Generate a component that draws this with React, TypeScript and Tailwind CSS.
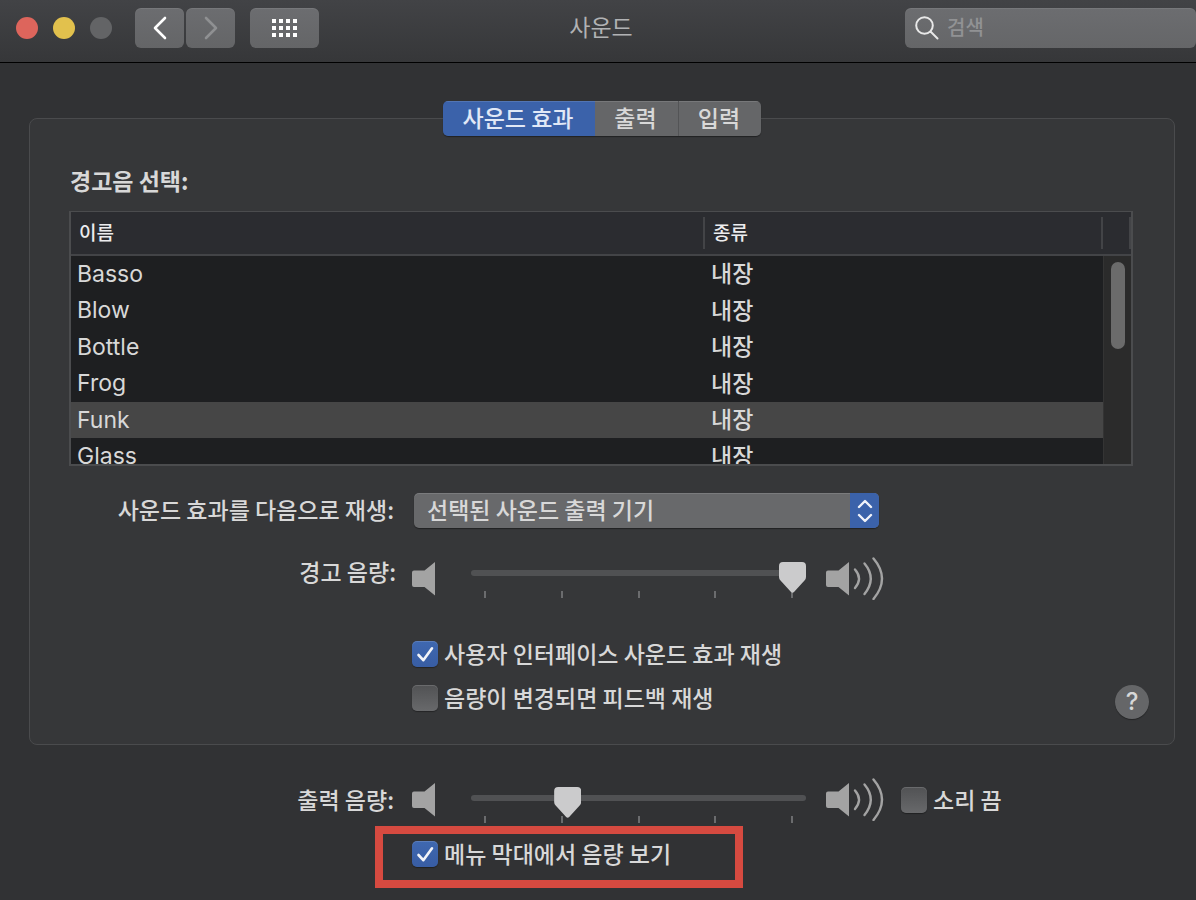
import React, { useState } from 'react';

interface AlertSound {
  name: string;
  kind: string;
}

const SOUNDS: AlertSound[] = [
  { name: 'Basso', kind: '내장' },
  { name: 'Blow', kind: '내장' },
  { name: 'Bottle', kind: '내장' },
  { name: 'Frog', kind: '내장' },
  { name: 'Funk', kind: '내장' },
  { name: 'Glass', kind: '내장' },
];

const TABS = ['사운드 효과', '출력', '입력'];

const SpeakerIcon: React.FC = () => (
  <svg width="24" height="43" viewBox="0 0 24 43" fill="#a3a3a3" className="shrink-0" aria-hidden="true">
    <path d="M2 13.5h10.5L23 5v33.500L12.500 30H2q-2 0-2-2V15.500q0-2 2-2z" />
  </svg>
);

const SpeakerLoudIcon: React.FC = () => (
  <svg width="58" height="43" viewBox="0 0 58 43" fill="none" className="shrink-0" aria-hidden="true">
    <path fill="#a3a3a3" d="M2 13.500h10.500L23 5v33.500L12.500 30H2q-2 0-2-2V15.500q0-2 2-2z" />
    <g stroke="#a3a3a3" strokeWidth="2.400" strokeLinecap="round">
      <path d="M29 12.500q8 9 0 18.500" />
      <path d="M38.500 6.500q12.500 15 0 30.500" />
      <path d="M47.500 1.500q17 20 0 40.500" />
    </g>
  </svg>
);

interface CheckboxProps {
  label: string;
  defaultChecked?: boolean;
}

const Checkbox: React.FC<CheckboxProps> = ({ label, defaultChecked }) => (
  <label className="flex items-center gap-1.5 h-[26px] whitespace-nowrap">
    <span className="relative size-[26px] shrink-0">
      <input
        type="checkbox"
        defaultChecked={defaultChecked}
        className="peer block size-[26px] appearance-none rounded-[5px] bg-linear-to-b from-[#515254] to-[#68696b] shadow-[0_1px_1px_rgba(0,0,0,0.35),inset_0_1px_0_rgba(255,255,255,0.14)] checked:from-[#3f68b0] checked:to-[#385da3]"
      />
      <svg
        viewBox="0 0 26 26"
        className="absolute inset-0 hidden size-[26px] pointer-events-none peer-checked:block"
        fill="none"
        stroke="#f2f4f8"
        strokeWidth="2.600"
        strokeLinecap="round"
        strokeLinejoin="round"
        aria-hidden="true"
      >
        <path d="M6.500 14l4.800 5.200L20 7.300" />
      </svg>
    </span>
    <span className="pb-[3px]">{label}</span>
  </label>
);

interface VolumeSliderProps {
  id: string;
  initial: number;
}

const VolumeSlider: React.FC<VolumeSliderProps> = ({ id, initial }) => (
  <div className="w-[335px]">
    <input
      id={id}
      type="range"
      min={0}
      max={100}
      defaultValue={initial}
      className="block w-full h-[31px] appearance-none bg-transparent [&::-webkit-slider-runnable-track]:h-1.5 [&::-webkit-slider-runnable-track]:rounded-full [&::-webkit-slider-runnable-track]:bg-[#505153] [&::-webkit-slider-runnable-track]:mb-[9px] [&::-webkit-slider-thumb]:appearance-none [&::-webkit-slider-thumb]:relative [&::-webkit-slider-thumb]:w-[27px] [&::-webkit-slider-thumb]:h-[31px] [&::-webkit-slider-thumb]:-mt-2 [&::-webkit-slider-thumb]:bg-[#cbcbcc] [&::-webkit-slider-thumb]:[clip-path:path('M4_0H23Q27_0_27_4V15Q27_17_25.500_18.500L15_30Q13.500_31.500_12_30L1.500_18.500Q0_17_0_15V4Q0_0_4_0Z')]"
    />
    <div className="flex justify-between px-[13px] -mt-0.5">
      {[0, 1, 2, 3, 4].map((t) => (
        <span key={t} className="w-0.5 h-[7px] bg-[#6b6c6e]" />
      ))}
    </div>
  </div>
);

const TitleBar: React.FC = () => (
  <header className="grid grid-cols-[1fr_auto_1fr] items-start h-[63px] pt-2 border-b border-black bg-linear-to-b from-[#424346] to-[#363739]">
    <div className="flex items-center h-10 pl-4">
      <div className="flex gap-[15px] mr-[23px]">
        <button aria-label="닫기" className="size-[22px] rounded-full bg-[#dd655c]" />
        <button aria-label="최소화" className="size-[22px] rounded-full bg-[#e2c14d]" />
        <button aria-label="확대" disabled className="size-[22px] rounded-full bg-[#636466]" />
      </div>
      <div className="flex gap-0.5 mr-[15px]">
        <button aria-label="뒤로" className="grid place-items-center w-[49px] h-10 rounded-md bg-linear-to-b from-[#6c6d70] to-[#646567] shadow-[inset_0_1px_0_rgba(255,255,255,0.08)]">
          <svg width="14" height="24" viewBox="0 0 14 24" fill="none" stroke="#fff" strokeWidth="2.600" strokeLinecap="round" strokeLinejoin="round" aria-hidden="true">
            <path d="M12 2L2 12l10 10" />
          </svg>
        </button>
        <button aria-label="앞으로" disabled className="grid place-items-center w-[49px] h-10 rounded-md bg-linear-to-b from-[#6c6d70] to-[#646567] shadow-[inset_0_1px_0_rgba(255,255,255,0.08)]">
          <svg width="14" height="24" viewBox="0 0 14 24" fill="none" stroke="#8f9092" strokeWidth="2.600" strokeLinecap="round" strokeLinejoin="round" aria-hidden="true">
            <path d="M2 2l10 10L2 22" />
          </svg>
        </button>
      </div>
      <button aria-label="모두 보기" className="grid place-items-center w-[69px] h-10 rounded-md bg-linear-to-b from-[#6c6d70] to-[#646567] shadow-[inset_0_1px_0_rgba(255,255,255,0.08)]">
        <span className="grid grid-cols-4 gap-[3px]">
          {Array.from({ length: 12 }, (_, i) => (
            <span key={i} className="size-1 bg-white" />
          ))}
        </span>
      </button>
    </div>
    <h1 className="pl-1.5 leading-9 font-normal text-[#b1b2b4]">사운드</h1>
    <label className="justify-self-end flex items-center gap-2 w-[291px] h-10 pl-2.5 rounded-md bg-linear-to-b from-[#6c6d70] to-[#656668] shadow-[inset_0_1px_0_rgba(255,255,255,0.08)]">
      <svg width="24" height="24" viewBox="0 0 24 24" fill="none" stroke="#e8e8e8" strokeWidth="2" strokeLinecap="round" className="shrink-0" aria-hidden="true">
        <circle cx="9.500" cy="9.500" r="8.300" />
        <path d="M15.500 15.500l7 7" />
      </svg>
      <input type="search" aria-label="검색" placeholder="검색" className="w-full pb-0.5 text-xl leading-7 bg-transparent outline-none placeholder:text-[#919294]" />
    </label>
  </header>
);

const SoundTable: React.FC = () => {
  const [selected, setSelected] = useState('Funk');

  return (
    <div className="flex h-[255px] overflow-hidden border-2 border-t border-[#4b4c4e] bg-[#1e1f21]">
      <div className="flex-1 overflow-hidden">
        <table className="w-full table-fixed border-separate border-spacing-0 text-left">
          <thead className="bg-[#2b2c30] text-[19px] text-[#ececee]">
            <tr>
              <th className="p-0 border-b-2 border-[#434447] font-medium">
                <div className="flex items-center justify-between h-[42px] pl-2">
                  <span className="pb-[3px]">이름</span>
                  <span className="w-0.5 h-8 bg-[#434447]" />
                </div>
              </th>
              <th className="w-[398px] p-0 border-b-2 border-[#434447] font-medium">
                <div className="flex items-center justify-between h-[42px] pl-2">
                  <span className="pb-[3px]">종류</span>
                  <span className="w-0.5 h-8 bg-[#434447]" />
                </div>
              </th>
            </tr>
          </thead>
          <tbody>
            {SOUNDS.map((sound) => (
              <tr
                key={sound.name}
                onClick={() => setSelected(sound.name)}
                className={`odd:h-9 even:h-[37px] ${sound.name === selected ? 'bg-[#464646]' : ''}`}
              >
                <td className="p-0 pl-1.5 pb-px leading-8 font-normal font-['Inter','Noto_Sans_CJK_KR',sans-serif]">{sound.name}</td>
                <td className="p-0 pl-1.5 pb-1 leading-8">{sound.kind}</td>
              </tr>
            ))}
          </tbody>
        </table>
      </div>
      <div className="flex flex-col w-7">
        <div className="flex items-center justify-end h-11 border-b-2 border-[#434447] bg-[#2b2c30]">
          <span className="w-0.5 h-8 bg-[#434447]" />
        </div>
        <div className="flex-1 pt-1.5 pl-[7px] border-l border-[#343434] bg-[#2b2b2b]">
          <div className="w-3.5 h-[87px] rounded-full bg-[#6b6b6b]" />
        </div>
      </div>
    </div>
  );
};

const App: React.FC = () => {
  const [tab, setTab] = useState(TABS[0]);

  return (
    <div className="min-h-screen bg-[#313234] text-[23px] leading-7 font-medium text-[#d8d8d8] font-['Noto_Sans_CJK_KR',sans-serif]">
      <TitleBar />

      <main className="pt-[38px] pl-[29px] pr-[21px]">
        <div className="relative flex w-fit h-[35px] mx-auto -mb-[18px] rounded-[5px] overflow-hidden shadow-[0_1px_1px_rgba(0,0,0,0.4)]">
          {TABS.map((name) => (
            <button
              key={name}
              onClick={() => setTab(name)}
              className={`first:w-[152px] w-[83px] pb-[3px] pr-0.5 last:border-l border-[#535456] shadow-[inset_0_1px_0_rgba(255,255,255,0.12)] ${name === tab ? 'bg-[#3b62aa] text-[#e1e8f6]' : 'bg-[#656668]'}`}
            >
              {name}
            </button>
          ))}
        </div>

        <section className="pt-[47px] pb-[25px] border border-[#4a4b4d] rounded-lg bg-[#363739]">
          <div className="pl-[39px] pr-[41px]">
            <h2 className="mb-[17px] pl-px font-bold">경고음 선택:</h2>
            <SoundTable />
          </div>

          <div className="flex items-center mt-[27px]">
            <label htmlFor="output-device" className="w-[364px] pb-[3px] text-right">사운드 효과를 다음으로 재생:</label>
            <div className="relative w-[465px] ml-5">
              <select
                id="output-device"
                className="block w-full h-[35px] pl-[13px] pb-[3px] appearance-none rounded-[5px] bg-[#68696b] shadow-[0_1px_1px_rgba(0,0,0,0.4),inset_0_1px_0_rgba(255,255,255,0.12)]"
              >
                <option>선택된 사운드 출력 기기</option>
              </select>
              <span className="absolute inset-y-0 right-0 grid place-items-center w-[29px] rounded-r-[5px] bg-[#3b62aa] pointer-events-none">
                <svg width="16" height="24" viewBox="0 0 16 24" fill="none" stroke="#f0f3fa" strokeWidth="2.400" strokeLinecap="round" strokeLinejoin="round" aria-hidden="true">
                  <path d="M2 8l6-6 6 6M2 16l6 6 6-6" />
                </svg>
              </span>
            </div>
          </div>

          <div className="flex items-start mt-[29px]">
            <label htmlFor="alert-volume" className="w-[366px] mr-4 text-right">경고 음량:</label>
            <SpeakerIcon />
            <div className="pt-[5px] ml-[35px] mr-5">
              <VolumeSlider id="alert-volume" initial={100} />
            </div>
            <SpeakerLoudIcon />
          </div>

          <div className="pl-[382px] pr-[25px] mt-[41px]">
            <Checkbox label="사용자 인터페이스 사운드 효과 재생" defaultChecked />
            <div className="flex items-start justify-between mt-[18px]">
              <Checkbox label="음량이 변경되면 피드백 재생" />
              <button
                aria-label="도움말"
                className="size-[34px] rounded-full bg-[#656668] text-2xl font-medium font-['Inter',sans-serif] shadow-[0_1px_1px_rgba(0,0,0,0.35)]"
              >
                ?
              </button>
            </div>
          </div>
        </section>

        <div className="flex items-start h-[45px] mt-[33px]">
          <label htmlFor="output-volume" className="w-[365px] pt-[7px] mr-[18px] text-right">출력 음량:</label>
          <SpeakerIcon />
          <div className="pt-[9px] ml-[35px] mr-5">
            <VolumeSlider id="output-volume" initial={27} />
          </div>
          <SpeakerLoudIcon />
          <div className="pt-[9px] ml-[17px]">
            <Checkbox label="소리 끔" />
          </div>
        </div>

        <div className="w-[368px] h-[62px] mt-[3px] ml-[346px] pt-[7px] pl-[29px] border-8 border-[#d64a40]">
          <Checkbox label="메뉴 막대에서 음량 보기" defaultChecked />
        </div>
      </main>
    </div>
  );
};

export default App;
